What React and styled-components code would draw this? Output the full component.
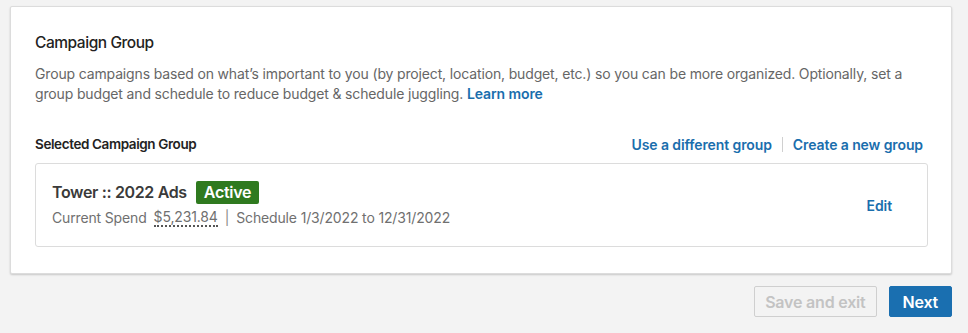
import React from "react";
import styled, { createGlobalStyle } from "styled-components";

const Global = createGlobalStyle`
  html, body { margin: 0; padding: 0; background: #f3f3f3; }
  body { font-family: Inter, "Liberation Sans", Arial, sans-serif; -webkit-font-smoothing: antialiased; }
  * { box-sizing: border-box; }
`;

const Page = styled.div`
  width: 968px;
  height: 333px;
  padding: 6px 16px 0 10px;
  background: #f3f3f3;
  display: flex;
  flex-direction: column;
`;

const Card = styled.section`
  background: #fff;
  border: 1px solid #dcdcdc;
  border-radius: 2px;
  box-shadow: 0 1px 2px rgba(0, 0, 0, 0.18);
  padding: 25px 23px 26px 24px;
  height: 268px;
`;

const Title = styled.h2`
  margin: 0;
  font-size: 15.5px;
  font-weight: 500;
  letter-spacing: -0.45px;
  color: #222;
  line-height: 22px;
`;

const Description = styled.p`
  margin: 10px 0 0;
  font-size: 14px;
  letter-spacing: -0.15px;
  line-height: 20px;
  color: #666;
`;

const Link = styled.a`
  color: #1a6ead;
  font-weight: 600;
  text-decoration: none;
  cursor: pointer;
  font-size: 14px;
  letter-spacing: -0.1px;
`;

const SectionHeader = styled.div`
  margin-top: 30px;
  display: flex;
  align-items: center;
  justify-content: space-between;
  height: 20px;
  padding-right: 5px;
`;

const Label = styled.div`
  font-size: 13.5px;
  font-weight: 600;
  letter-spacing: -0.4px;
  color: #222;
`;

const Links = styled.div`
  display: flex;
  align-items: center;
  gap: 10px;
`;

const Separator = styled.span`
  width: 1px;
  height: 15px;
  background: #d0d0d0;
`;

const GroupBox = styled.div`
  margin-top: 9px;
  border: 1px solid #dcdcdc;
  border-radius: 3px;
  height: 84px;
  padding: 0 35px 0 16px;
  display: flex;
  justify-content: space-between;
  align-items: center;
`;

const GroupInfo = styled.div`
  display: flex;
  flex-direction: column;
  gap: 4px;
  margin-top: -3px;
`;

const NameRow = styled.div`
  display: flex;
  align-items: center;
  gap: 9px;
`;

const Name = styled.span`
  font-size: 16px;
  font-weight: 600;
  letter-spacing: -0.35px;
  color: #3a3a3a;
`;

const Badge = styled.span`
  background: #2f7a1f;
  color: #fff;
  font-size: 16px;
  font-weight: 600;
  letter-spacing: -0.3px;
  padding: 0 8px;
  height: 23px;
  line-height: 23px;
  border-radius: 2px;
`;

const Meta = styled.div`
  font-size: 14px;
  letter-spacing: -0.15px;
  color: #707070;
  display: flex;
  align-items: center;
  gap: 7px;
`;

const Pipe = styled.span`
  color: #8a8a8a;
`;

const Amount = styled.span`
  border-bottom: 2px dotted #555;
  line-height: 17px;
`;

const Footer = styled.div`
  display: flex;
  justify-content: flex-end;
  gap: 12px;
  margin-top: 12px;
`;

const Button = styled.button`
  height: 31px;
  padding: 0 ${(p) => (p.$primary ? "13px" : "10px")};
  font-family: inherit;
  font-size: 16px;
  font-weight: 600;
  letter-spacing: -0.2px;
  border-radius: 2px;
  border: 1px solid ${(p) => (p.$primary ? "#1a6fb0" : "#cfcfcf")};
  background: ${(p) => (p.$primary ? "#1a6fb0" : "transparent")};
  color: ${(p) => (p.$primary ? "#fff" : "#c3c3c3")};
  cursor: ${(p) => (p.disabled ? "default" : "pointer")};
`;

export default function App() {
  return (
    <>
      <Global />
      <Page>
        <Card>
          <Title>Campaign Group</Title>
          <Description>
            Group campaigns based on what’s important to you (by project, location, budget, etc.) so you can be more
            organized. Optionally, set a group budget and schedule to reduce budget &amp; schedule juggling.{" "}
            <Link>Learn more</Link>
          </Description>
          <SectionHeader>
            <Label>Selected Campaign Group</Label>
            <Links>
              <Link>Use a different group</Link>
              <Separator />
              <Link>Create a new group</Link>
            </Links>
          </SectionHeader>
          <GroupBox>
            <GroupInfo>
              <NameRow>
                <Name>Tower :: 2022 Ads</Name>
                <Badge>Active</Badge>
              </NameRow>
              <Meta>
                <span>Current Spend</span>
                <Amount>$5,231.84</Amount>
                <Pipe>|</Pipe>
                <span>Schedule 1/3/2022 to 12/31/2022</span>
              </Meta>
            </GroupInfo>
            <Link>Edit</Link>
          </GroupBox>
        </Card>
        <Footer>
          <Button disabled>Save and exit</Button>
          <Button $primary>Next</Button>
        </Footer>
      </Page>
    </>
  );
}
